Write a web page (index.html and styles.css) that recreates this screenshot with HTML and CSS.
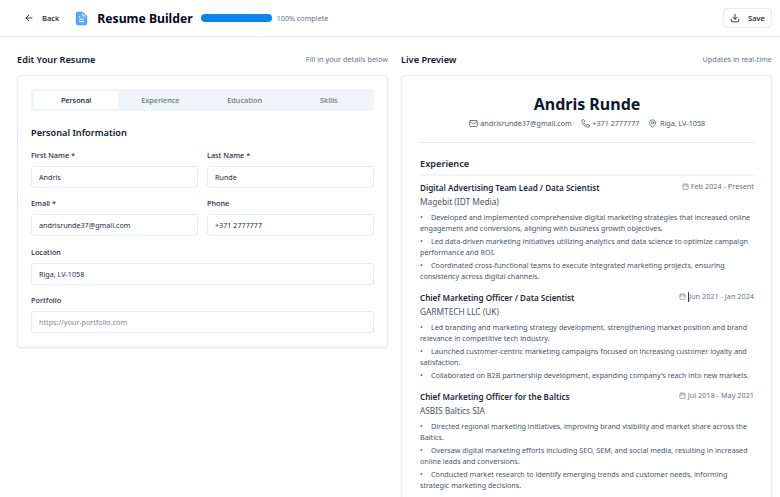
FILE: index.html
```html
<!DOCTYPE html>
<html lang="en">
<head>
  <meta charset="UTF-8" />
  <meta name="viewport" content="width=device-width, initial-scale=1.0" />
  <title>Resume Builder</title>
  <link rel="stylesheet" href="styles.css">
</head>
<body>

<!-- top bar -->
<header class="topbar">
  <div class="topbar-left">
    <a class="back-link" href="#">
      <svg class="icon" viewBox="0 0 24 24"><path d="M19 12H5M12 19l-7-7 7-7"/></svg>
      <span>Back</span>
    </a>
    <svg class="doc-icon" viewBox="0 0 24 24"><path class="doc-fill" d="M6 2h8l6 6v12a2 2 0 0 1-2 2H6a2 2 0 0 1-2-2V4a2 2 0 0 1 2-2z"/><path class="doc-line" d="M14 3v5h5M8 13h8M8 17h8M8 9h2"/></svg>
    <h1>Resume Builder</h1>
    <div class="progress"><div class="progress-fill"></div></div>
    <span class="progress-label">100% complete</span>
  </div>
  <button class="save-btn">
    <svg class="icon" viewBox="0 0 24 24"><path d="M21 15v4a2 2 0 0 1-2 2H5a2 2 0 0 1-2-2v-4M7 10l5 5 5-5M12 15V3"/></svg>
    <span>Save</span>
  </button>
</header>

<main class="columns">

  <!-- editor -->
  <section class="column">
    <div class="column-head">
      <h2>Edit Your Resume</h2>
      <span class="hint">Fill in your details below</span>
    </div>
    <div class="card form-card">
      <div class="tabs">
        <button class="tab active">Personal</button>
        <button class="tab">Experience</button>
        <button class="tab">Education</button>
        <button class="tab">Skills</button>
      </div>
      <h3>Personal Information</h3>
      <div class="form-grid">
        <label class="field"><span>First Name *</span><input type="text" value="Andris"></label>
        <label class="field"><span>Last Name *</span><input type="text" value="Runde"></label>
        <label class="field"><span>Email *</span><input type="text" value="andrisrunde37@gmail.com"></label>
        <label class="field"><span>Phone</span><input type="text" value="+371 2777777"></label>
        <label class="field wide"><span>Location</span><input type="text" value="Riga, LV-1058"></label>
        <label class="field wide"><span>Portfolio</span><input type="text" placeholder="https://your-portfolio.com"></label>
      </div>
    </div>
  </section>

  <!-- preview -->
  <section class="column">
    <div class="column-head">
      <h2>Live Preview</h2>
      <span class="hint">Updates in real-time</span>
    </div>
    <div class="card preview-card">
      <div class="resume-head">
        <div class="resume-name">Andris Runde</div>
        <div class="contacts">
          <span class="contact"><svg class="mini" viewBox="0 0 24 24"><rect x="2" y="4" width="20" height="16" rx="2"/><path d="M22 7l-10 6L2 7"/></svg>andrisrunde37@gmail.com</span>
          <span class="contact"><svg class="mini" viewBox="0 0 24 24"><path d="M22 17v3a2 2 0 0 1-2 2A19 19 0 0 1 2 4a2 2 0 0 1 2-2h3a2 2 0 0 1 2 1.7l.5 3a2 2 0 0 1-.6 1.8L7.6 9.8a16 16 0 0 0 6.6 6.6l1.3-1.3a2 2 0 0 1 1.8-.6l3 .5a2 2 0 0 1 1.7 2z"/></svg>+371 2777777</span>
          <span class="contact"><svg class="mini" viewBox="0 0 24 24"><path d="M20 10c0 6-8 12-8 12s-8-6-8-12a8 8 0 0 1 16 0z"/><circle cx="12" cy="10" r="3"/></svg>Riga, LV-1058</span>
        </div>
      </div>

      <h4>Experience</h4>

      <article class="job">
        <div class="job-head">
          <div class="job-title">Digital Advertising Team Lead / Data Scientist</div>
          <div class="job-date"><svg class="cal" viewBox="0 0 24 24"><rect x="3" y="4" width="18" height="18" rx="2"/><path d="M16 2v4M8 2v4M3 10h18"/></svg>Feb 2024 - Present</div>
        </div>
        <div class="company">Magebit (IDT Media)</div>
        <ul>
          <li>Developed and implemented comprehensive digital marketing strategies that increased online engagement and conversions, aligning with business growth objectives.</li>
          <li>Led data-driven marketing initiatives utilizing analytics and data science to optimize campaign performance and ROI.</li>
          <li>Coordinated cross-functional teams to execute integrated marketing projects, ensuring consistency across digital channels.</li>
        </ul>
      </article>

      <article class="job">
        <div class="job-head">
          <div class="job-title">Chief Marketing Officer / Data Scientist</div>
          <div class="job-date"><svg class="cal" viewBox="0 0 24 24"><rect x="3" y="4" width="18" height="18" rx="2"/><path d="M16 2v4M8 2v4M3 10h18"/></svg><i class="caret"></i>Jun 2021 - Jan 2024</div>
        </div>
        <div class="company">GARMTECH LLC (UK)</div>
        <ul>
          <li>Led branding and marketing strategy development, strengthening market position and brand relevance in competitive tech industry.</li>
          <li>Launched customer-centric marketing campaigns focused on increasing customer loyalty and satisfaction.</li>
          <li>Collaborated on B2B partnership development, expanding company's reach into new markets.</li>
        </ul>
      </article>

      <article class="job">
        <div class="job-head">
          <div class="job-title">Chief Marketing Officer for the Baltics</div>
          <div class="job-date"><svg class="cal" viewBox="0 0 24 24"><rect x="3" y="4" width="18" height="18" rx="2"/><path d="M16 2v4M8 2v4M3 10h18"/></svg>Jul 2018 - May 2021</div>
        </div>
        <div class="company">ASBIS Baltics SIA</div>
        <ul>
          <li>Directed regional marketing initiatives, improving brand visibility and market share across the Baltics.</li>
          <li>Oversaw digital marketing efforts including SEO, SEM, and social media, resulting in increased online leads and conversions.</li>
          <li>Conducted market research to identify emerging trends and customer needs, informing strategic marketing decisions.</li>
        </ul>
      </article>
    </div>
  </section>
</main>

</body>
</html>
```

FILE: styles.css
```css
/* ─── page base ─────────────────────────────────────────── */
html, body {
  height: 100%;
  overflow: hidden;
}

body {
  margin: 0;
  font-family: "Noto Sans", "Open Sans", sans-serif;
  color: #0f172a;
  background: #fff;
}

/* ─── top bar ───────────────────────────────────────────── */
.topbar {
  height: 36px;
  padding: 0 8px 0 24px;
  display: flex;
  align-items: center;
  justify-content: space-between;
  border-bottom: 1px solid #e5eaf1;
  box-shadow: 0 1px 2px rgba(15, 23, 42, 0.03);
}

.topbar-left {
  display: flex;
  align-items: center;
}

.back-link {
  display: flex;
  align-items: center;
  gap: 8px;
  font-size: 7.6px;
  font-weight: 500;
  color: #0f172a;
  text-decoration: none;
}

.icon {
  width: 10px;
  height: 10px;
  fill: none;
  stroke: #0f172a;
  stroke-width: 2;
  stroke-linecap: round;
  stroke-linejoin: round;
}

.doc-icon {
  width: 15px;
  height: 15px;
  margin-left: 15px;
}

.doc-fill {
  fill: #5aaef7;
  stroke: #2b93f3;
  stroke-width: 1.5;
  stroke-linejoin: round;
}

.doc-line {
  fill: none;
  stroke: #eaf5ff;
  stroke-width: 1.6;
}

h1 {
  margin: 0 0 0 8px;
  font-size: 12.2px;
  font-weight: 700;
  color: #020617;
}

.progress {
  width: 71px;
  height: 8px;
  margin-left: 8px;
  background: #e2e8f0;
  border-radius: 4px;
  overflow: hidden;
}

.progress-fill {
  width: 100%;
  height: 100%;
  background: #0a84f0;
}

.progress-label {
  margin-left: 5px;
  font-size: 7.2px;
  color: #64748b;
}

.save-btn {
  height: 20px;
  width: 49px;
  display: flex;
  align-items: center;
  justify-content: center;
  gap: 8px;
  font: 500 7.6px "Noto Sans", sans-serif;
  color: #0f172a;
  background: #fff;
  border: 1px solid #e5eaf1;
  border-radius: 4px;
}

/* ─── columns ───────────────────────────────────────────── */
.columns {
  display: grid;
  grid-template-columns: 371px 371px;
  gap: 13px;
  padding: 11px 8px 0 17px;
}

.column-head {
  height: 22px;
  margin-bottom: 5px;
  display: flex;
  align-items: center;
  justify-content: space-between;
}

h2 {
  margin: 0;
  font-size: 9.2px;
  font-weight: 600;
}

.hint {
  font-size: 7.3px;
  color: #64748b;
}

.card {
  box-sizing: border-box;
  background: #fff;
  border: 1px solid #e5eaf1;
  border-radius: 4px;
  box-shadow: 0 1px 2px rgba(15, 23, 42, 0.05);
}

/* ─── form card ─────────────────────────────────────────── */
.form-card {
  height: 273px;
  padding: 13px;
}

.tabs {
  height: 22px;
  padding: 2px 3px;
  box-sizing: border-box;
  display: grid;
  grid-template-columns: repeat(4, 1fr);
  background: #f1f5f9;
  border-radius: 3px;
}

.tab {
  padding: 0;
  font: 500 7.3px "Noto Sans", sans-serif;
  color: #64748b;
  background: none;
  border: 0;
  border-radius: 2px;
}

.tab.active {
  color: #0f172a;
  background: #fff;
}

h3 {
  margin: 15px 0 0;
  font-size: 9.2px;
  line-height: 14px;
  font-weight: 600;
}

.form-grid {
  display: grid;
  grid-template-columns: 1fr 1fr;
  column-gap: 9px;
  row-gap: 10.4px;
  margin-top: 10px;
}

.field {
  display: flex;
  flex-direction: column;
  gap: 5px;
}

.field.wide {
  grid-column: 1 / -1;
}

.field span {
  font-size: 7.3px;
  line-height: 11px;
  font-weight: 500;
  color: #1e293b;
}

.field input {
  box-sizing: border-box;
  width: 100%;
  height: 22px;
  padding: 0 7px;
  font: 7.2px "Noto Sans", sans-serif;
  color: #1e293b;
  background: #fff;
  border: 1px solid #e5eaf1;
  border-radius: 3px;
}

.field input::placeholder {
  color: #7b8798;
}

/* ─── preview card ──────────────────────────────────────── */
/* cut off by the window, so no bottom edge */
.preview-card {
  height: 422px;
  padding: 17px 17px 0 18px;
  overflow: hidden;
  border-bottom: 0;
  border-radius: 4px 4px 0 0;
}

.resume-head {
  padding-bottom: 13px;
  text-align: center;
  border-bottom: 1px solid #e5eaf1;
}

.resume-name {
  font-size: 16px;
  line-height: 22px;
  font-weight: 700;
  color: #0f172a;
}

.contacts {
  margin-top: 2px;
  display: flex;
  justify-content: center;
  gap: 9px;
  font-size: 7.2px;
  line-height: 12px;
  color: #475569;
}

.contact {
  display: flex;
  align-items: center;
  gap: 2.5px;
}

.mini {
  width: 9px;
  height: 9px;
  fill: none;
  stroke: #475569;
  stroke-width: 2;
  stroke-linecap: round;
  stroke-linejoin: round;
}

h4 {
  margin: 14px 0 0;
  padding-bottom: 3px;
  font-size: 9.2px;
  line-height: 14px;
  font-weight: 600;
  color: #1e293b;
  border-bottom: 2px solid #f1f5f9;
}

.job {
  margin-top: 5px;
}

.job + .job {
  margin-top: 9px;
}

.job-head {
  display: flex;
  justify-content: space-between;
  align-items: flex-start;
}

.job-title {
  font-size: 8.1px;
  line-height: 13px;
  font-weight: 600;
  color: #1e293b;
}

.job-date {
  display: flex;
  align-items: center;
  font-size: 7.3px;
  line-height: 11px;
  color: #64748b;
}

.cal {
  width: 7px;
  height: 7px;
  margin-right: 2px;
  fill: none;
  stroke: #64748b;
  stroke-width: 2;
}

.caret {
  width: 1px;
  height: 10px;
  background: #334155;
}

.company {
  margin-top: 1px;
  font-size: 8.3px;
  line-height: 13px;
  color: #475569;
}

ul {
  margin: 4px 0 0;
  padding: 0;
  list-style: none;
}

li {
  font-size: 7.2px;
  line-height: 11px;
  margin-bottom: 2px;
  color: #475569;
}

li::before {
  content: "•";
  display: inline-block;
  width: 11px;
}
```
